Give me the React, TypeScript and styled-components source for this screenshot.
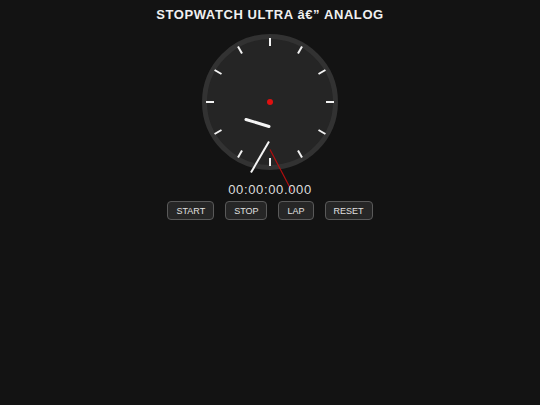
import React from "react";
import styled, { createGlobalStyle } from "styled-components";

const GlobalStyle = createGlobalStyle`
  html, body {
    margin: 0;
    padding: 0;
    background: #131313;
  }
  body {
    font-family: "Liberation Sans", Arial, sans-serif;
    color: #eeeeee;
  }
`;

const buttons = ["START", "STOP", "LAP", "RESET"];

export default function App() {
  const ticks = Array.from({ length: 12 }, (_, i) => i * 30);
  return (
    <>
      <GlobalStyle />
      <Page>
        <Title>STOPWATCH ULTRA â€” ANALOG</Title>
        <ClockFace>
          <ClockDrawing width="136" height="136" viewBox="0 0 136 136">
            {ticks.map((deg) => {
              const r = (deg * Math.PI) / 180;
              return (
                <line
                  key={deg}
                  x1={68 + Math.sin(r) * 56}
                  y1={68 - Math.cos(r) * 56}
                  x2={68 + Math.sin(r) * 64}
                  y2={68 - Math.cos(r) * 64}
                  stroke="#f2f2f2"
                  strokeWidth="2"
                />
              );
            })}
            <line x1="44" y1="85.5" x2="67" y2="92.5" stroke="#f5f5f5" strokeWidth="3" strokeLinecap="round" />
            <line x1="67" y1="107.5" x2="49" y2="138.5" stroke="#f5f5f5" strokeWidth="2" />
            <line x1="68" y1="115.5" x2="90" y2="157.5" stroke="#b00e0e" strokeWidth="1.2" />
            <circle cx="68" cy="68" r="3" fill="#e01010" />
          </ClockDrawing>
        </ClockFace>
        <Readout>00:00:00.000</Readout>
        <Controls>
          {buttons.map((b) => (
            <ControlButton key={b}>{b}</ControlButton>
          ))}
        </Controls>
      </Page>
    </>
  );
}

const Page = styled.div`
  display: flex;
  flex-direction: column;
  align-items: center;
  padding-top: 7px;
  min-height: 405px;
  box-sizing: border-box;
`;

const Title = styled.h1`
  margin: 0;
  font-size: 13px;
  line-height: 16px;
  font-weight: 700;
  letter-spacing: 0.6px;
  color: #f0f0f0;
`;

const ClockFace = styled.div`
  position: relative;
  margin-top: 11px;
  width: 126px;
  height: 126px;
  border-radius: 50%;
  border: 5px solid #323232;
  background: #252525;
`;

const ClockDrawing = styled.svg`
  position: absolute;
  left: -5px;
  top: -5px;
  overflow: visible;
`;

const Readout = styled.div`
  position: relative;
  margin-top: 12px;
  font-size: 13px;
  line-height: 16px;
  letter-spacing: 0.65px;
  color: #dddddd;
`;

const Controls = styled.div`
  display: flex;
  gap: 11px;
  margin-top: 3px;
`;

const ControlButton = styled.button`
  height: 19px;
  padding: 0 8px;
  border: 1px solid #5a5a5a;
  border-radius: 4px;
  background: #262626;
  color: #e0e0e0;
  font-family: "Liberation Sans", Arial, sans-serif;
  font-size: 9px;
`;
